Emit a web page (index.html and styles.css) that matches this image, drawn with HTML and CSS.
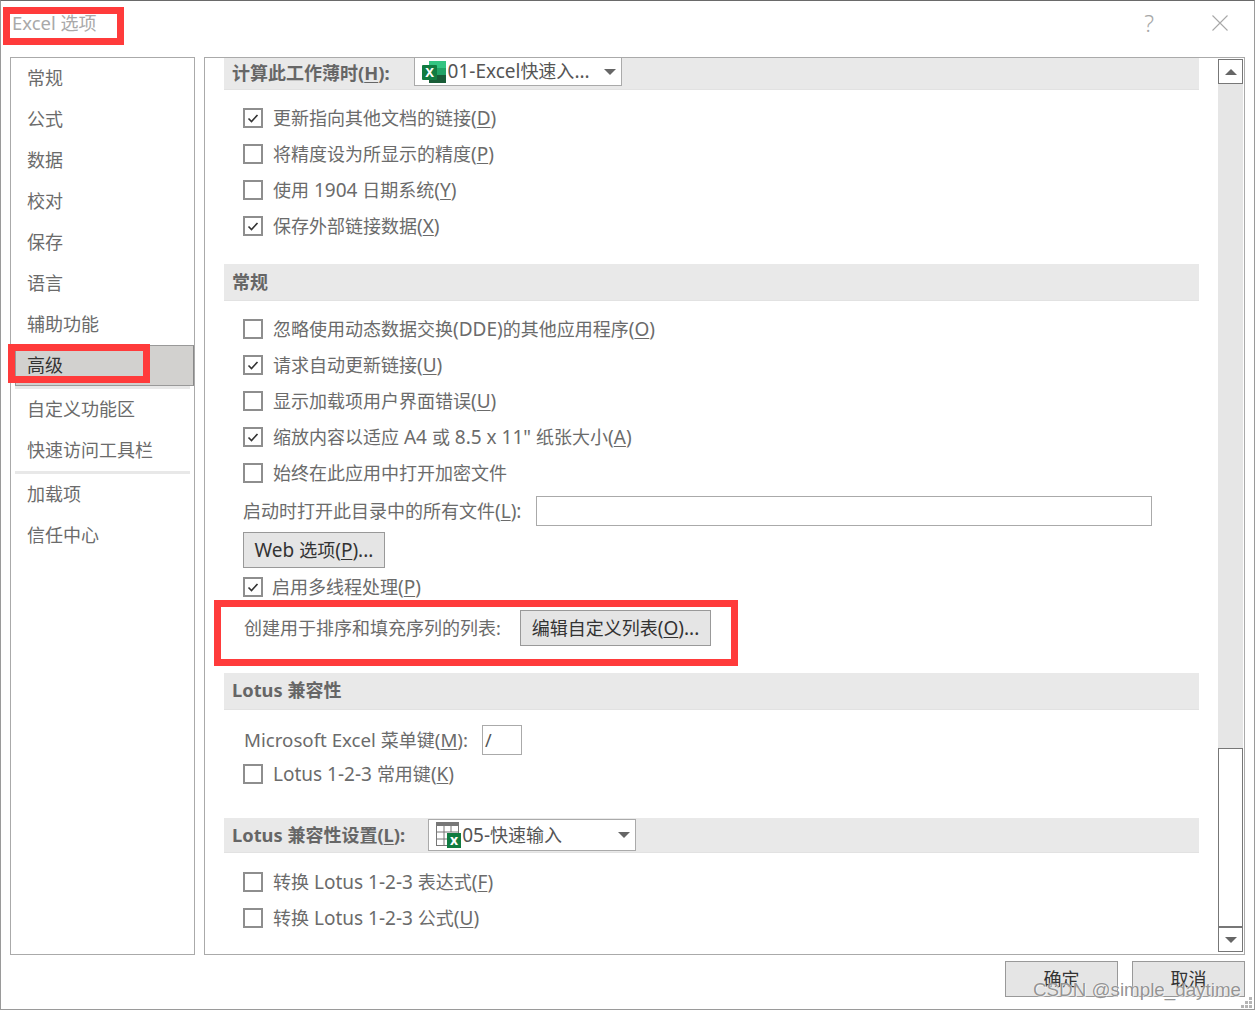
FILE: index.html
```html
<!DOCTYPE html>
<html lang="zh-CN">
<head>
<meta charset="utf-8">
<title>Excel 选项</title>
<link rel="stylesheet" href="styles.css">
</head>
<body>
<div class="window">
  <header class="titlebar">
    <span class="title"><span class="lt">Excel </span>选项</span>
    <div class="title-actions">
      <span class="help">?</span>
      <svg class="close" width="16" height="16" viewBox="0 0 16 16"><path d="M0.500 0.500 15.500 15.500M15.500 0.500 0.500 15.500" stroke="#a8a8a8" stroke-width="1.100" fill="none"/></svg>
    </div>
  </header>

  <div class="main">
    <nav class="sidebar">
      <div class="nav-item">常规</div>
      <div class="nav-item">公式</div>
      <div class="nav-item">数据</div>
      <div class="nav-item">校对</div>
      <div class="nav-item">保存</div>
      <div class="nav-item">语言</div>
      <div class="nav-item">辅助功能</div>
      <div class="nav-item selected">高级</div>
      <div class="nav-sep"></div>
      <div class="nav-item">自定义功能区</div>
      <div class="nav-item">快速访问工具栏</div>
      <div class="nav-sep"></div>
      <div class="nav-item">加载项</div>
      <div class="nav-item">信任中心</div>
    </nav>

    <section class="panel">
      <div class="content">
        <div class="section-head head-first">
          <span class="head-label">计算此工作薄时<span class="lt">(<u>H</u>):</span></span>
          <div class="combo combo-first">
            <svg class="xl-icon" width="24" height="24" viewBox="0 0 24 24">
              <rect x="7" y="1" width="17" height="8" fill="#33c481"/>
              <rect x="7" y="8" width="17" height="8" fill="#21a366"/>
              <rect x="7" y="15" width="17" height="8" fill="#185c37"/>
              <rect x="0" y="5" width="15" height="15" rx="1" fill="#107c41"/>
              <text x="7.500" y="17" class="xl-letter">X</text>
            </svg>
            <span class="combo-text"><span class="lt">01-Excel</span>快速入<span class="lt">...</span></span>
            <span class="arrow"></span>
          </div>
        </div>
        <div class="rows rows-a">
          <div class="row"><span class="check on"><svg width="16" height="16" viewBox="0 0 16 16"><path d="M3.500 8.500 6.500 11.500 12.500 5" stroke="#333" stroke-width="1.600" fill="none"/></svg></span><span class="label">更新指向其他文档的链接<span class="lt">(<u>D</u>)</span></span></div>
          <div class="row"><span class="check"></span><span class="label">将精度设为所显示的精度<span class="lt">(<u>P</u>)</span></span></div>
          <div class="row"><span class="check"></span><span class="label">使用<span class="lt"> 1904 </span>日期系统<span class="lt">(<u>Y</u>)</span></span></div>
          <div class="row"><span class="check on"><svg width="16" height="16" viewBox="0 0 16 16"><path d="M3.500 8.500 6.500 11.500 12.500 5" stroke="#333" stroke-width="1.600" fill="none"/></svg></span><span class="label">保存外部链接数据<span class="lt">(<u>X</u>)</span></span></div>
        </div>

        <div class="section-head head-general"><span class="head-label">常规</span></div>
        <div class="rows rows-b">
          <div class="row"><span class="check"></span><span class="label">忽略使用动态数据交换<span class="lt">(DDE)</span>的其他应用程序<span class="lt">(<u>O</u>)</span></span></div>
          <div class="row"><span class="check on"><svg width="16" height="16" viewBox="0 0 16 16"><path d="M3.500 8.500 6.500 11.500 12.500 5" stroke="#333" stroke-width="1.600" fill="none"/></svg></span><span class="label">请求自动更新链接<span class="lt">(<u>U</u>)</span></span></div>
          <div class="row"><span class="check"></span><span class="label">显示加载项用户界面错误<span class="lt">(<u>U</u>)</span></span></div>
          <div class="row"><span class="check on"><svg width="16" height="16" viewBox="0 0 16 16"><path d="M3.500 8.500 6.500 11.500 12.500 5" stroke="#333" stroke-width="1.600" fill="none"/></svg></span><span class="label">缩放内容以适应<span class="lt"> A4 </span>或<span class="lt"> 8.5 x 11" </span>纸张大小<span class="lt">(<u>A</u>)</span></span></div>
          <div class="row"><span class="check"></span><span class="label">始终在此应用中打开加密文件</span></div>
          <div class="field-row startup">
            <span class="field-label">启动时打开此目录中的所有文件<span class="lt">(<u>L</u>):</span></span>
            <span class="textbox textbox-wide"></span>
          </div>
          <button class="btn btn-web"><span class="lt">Web </span>选项<span class="lt">(<u>P</u>)...</span></button>
          <div class="row row-multi"><span class="check on"><svg width="16" height="16" viewBox="0 0 16 16"><path d="M3.500 8.500 6.500 11.500 12.500 5" stroke="#333" stroke-width="1.600" fill="none"/></svg></span><span class="label">启用多线程处理<span class="lt">(<u>P</u>)</span></span></div>
          <div class="field-row sortlist">
            <span class="field-label">创建用于排序和填充序列的列表:</span>
            <button class="btn btn-list">编辑自定义列表<span class="lt">(<u>O</u>)...</span></button>
          </div>
        </div>

        <div class="section-head head-lotus"><span class="head-label"><span class="lt">Lotus </span>兼容性</span></div>
        <div class="rows rows-c">
          <div class="field-row menukey">
            <span class="field-label"><span class="lt">Microsoft Excel </span>菜单键<span class="lt">(<u>M</u>):</span></span>
            <span class="textbox textbox-key">/</span>
          </div>
          <div class="row"><span class="check"></span><span class="label"><span class="lt">Lotus 1-2-3 </span>常用键<span class="lt">(<u>K</u>)</span></span></div>
        </div>

        <div class="section-head head-lotus-set">
          <span class="head-label"><span class="lt">Lotus </span>兼容性设置<span class="lt">(<u>L</u>):</span></span>
          <div class="combo combo-last">
            <svg class="sheet-icon" width="25" height="26" viewBox="0 0 25 26">
              <rect x="0.500" y="0.500" width="22" height="23" fill="#fff" stroke="#777"/>
              <rect x="0" y="0" width="23" height="4" fill="#777"/>
              <path d="M8 4V24M15 4V10M0 10H23M0 17H11" stroke="#777" fill="none"/>
              <rect x="11" y="11" width="14" height="15" fill="#107c41"/>
              <text x="18" y="23" class="xl-letter small">x</text>
            </svg>
            <span class="combo-text"><span class="lt">05-</span>快速输入</span>
            <span class="arrow"></span>
          </div>
        </div>
        <div class="rows rows-d">
          <div class="row"><span class="check"></span><span class="label">转换<span class="lt"> Lotus 1-2-3 </span>表达式<span class="lt">(<u>F</u>)</span></span></div>
          <div class="row"><span class="check"></span><span class="label">转换<span class="lt"> Lotus 1-2-3 </span>公式<span class="lt">(<u>U</u>)</span></span></div>
        </div>
      </div>

      <div class="scrollbar">
        <div class="sb-btn"><span class="tri-up"></span></div>
        <div class="sb-track"></div>
        <div class="sb-thumb"></div>
        <div class="sb-btn sb-btn-down"><span class="tri-down"></span></div>
      </div>
    </section>
  </div>

  <footer class="footer">
    <button class="btn btn-foot">确定</button>
    <button class="btn btn-foot">取消</button>
  </footer>

  <svg class="grip" width="12" height="12" viewBox="0 0 12 12"><path d="M8 0h3v3H8zM4 4h3v3H4zM8 4h3v3H8zM0 8h3v3H0zM4 8h3v3H4zM8 8h3v3H8z" fill="#b5b5b5"/></svg>
  <div class="mark mark-title"></div>
  <div class="mark mark-nav"></div>
  <div class="mark mark-list"></div>
  <div class="watermark">CSDN @simple_daytime</div>
</div>
</body>
</html>
```
FILE: styles.css
```css
* { box-sizing: border-box; }
html, body { margin: 0; padding: 0; background: #fff; }
body {
  font-family: "Noto Sans", "Noto Sans CJK SC", sans-serif;
  font-size: 18px;
  color: #6b6b6b;
  overflow: hidden;
}
u { text-underline-offset: 2px; text-decoration-thickness: 1px; }
.lt { font-size: 19px; white-space: pre; }
.window {
  position: relative;
  width: 1255px;
  height: 1010px;
  border-top: 1px solid #6a6a6a;
  border-left: 1px solid #9a9a9a;
  border-right: 1px solid #9a9a9a;
  border-bottom: 1px solid #9a9a9a;
  display: flex;
  flex-direction: column;
  overflow: hidden;
}
.titlebar {
  height: 56px;
  flex: none;
  display: flex;
  justify-content: space-between;
  align-items: flex-start;
  padding: 9px 26px 0 11px;
}
.title { color: #a9a9a9; line-height: 26px; }
.title .lt { font-size: 18.5px; }
.title-actions { display: flex; align-items: center; gap: 58px; }
.help { color: #a8a8a8; font-size: 23px; line-height: 26px; font-family: "Noto Sans", sans-serif; font-weight: 300; }
.close { display: block; }
.main { flex: none; display: flex; gap: 9px; padding-left: 9px; height: 898px; }
.sidebar {
  width: 185px;
  border: 1px solid #aaa;
  display: flex;
  flex-direction: column;
}
.nav-item { height: 41px; flex: none; line-height: 41px; padding-left: 16px; }
.nav-item.selected {
  margin-left: 4px;
  padding-left: 11px;
  background: #d2d1cf;
  border: 1px solid #999;
  border-right-color: #888;
  color: #333;
  line-height: 39px;
}
.nav-sep { height: 3px; flex: none; margin: 0 4px; background: #e8e8e8; }
.panel {
  width: 1041px;
  border: 1px solid #aaa;
  display: flex;
  padding-left: 19px;
}
.content { width: 975px; flex: none; }
.section-head {
  background: #e9e9e9;
  border-bottom: 1px solid #e2e2e2;
  display: flex;
  align-items: center;
  padding-left: 8px;
}
.head-label { font-weight: 700; color: #666; white-space: nowrap; padding-bottom: 2px; }
.head-label .lt { font-size: 18.3px; }
.head-first { height: 32px; align-items: flex-start; }
.head-first .head-label { line-height: 29px; }
.head-general { height: 37px; margin-top: 20px; }
.head-lotus { height: 37px; margin-top: 27px; }
.head-lotus .head-label { padding-bottom: 4px; }
.head-lotus-set { height: 35px; margin-top: 26px; }
.combo {
  height: 32px;
  background: #fff;
  border: 1px solid #aaa;
  display: flex;
  align-items: center;
  position: relative;
  color: #555;
}
.combo-first { width: 208px; height: 29px; margin-left: 24px; padding-left: 7px; margin-top: -1px; }
.combo-last { width: 208px; margin-left: 23px; padding-left: 7px; }
.combo-text { margin-left: 2px; white-space: nowrap; padding-bottom: 3px; }
.combo-last .combo-text { margin-left: 1px; padding-bottom: 2px; }
.xl-icon, .sheet-icon { flex: none; }
.xl-letter { fill: #fff; font: 700 13px "Noto Sans", sans-serif; text-anchor: middle; }
.xl-letter.small { font-size: 14px; }
.arrow {
  position: absolute;
  right: 5px;
  top: 50%;
  margin-top: -3px;
  border-left: 6px solid transparent;
  border-right: 6px solid transparent;
  border-top: 6px solid #666;
}
.rows { padding-left: 19px; }
.rows-a { margin-top: 10px; }
.rows-b { margin-top: 10px; }
.rows-c { margin-top: 15px; }
.rows-c .row { margin-top: 1px; }
.rows-d { margin-top: 11px; }
.row { height: 36px; display: flex; align-items: center; white-space: pre; }
.label { padding-bottom: 2px; white-space: pre; }
.check {
  width: 20px;
  height: 20px;
  flex: none;
  margin-right: 10px;
  border: 2px solid #8e8e8e;
  background: #fff;
  display: flex;
  align-items: center;
  justify-content: center;
}
.check svg { display: block; }
.field-row { display: flex; align-items: center; white-space: nowrap; }
.field-label { white-space: pre; padding-bottom: 2px; }
.startup { height: 30px; margin-top: 5px; }
.startup .field-label { width: 293px; flex: none; }
.textbox { display: block; height: 30px; border: 1px solid #aaa; background: #fff; color: #555; }
.textbox-wide { width: 616px; }
.btn {
  font: inherit;
  color: #333;
  background: #e5e5e5;
  border: 1px solid #999;
  border-radius: 0;
  padding: 0 0 2px;
  display: block;
  white-space: nowrap;
}
.btn-web { width: 142px; height: 36px; margin-top: 6px; }
.row-multi { margin-top: 1px; }
.row-multi .check { margin-right: 9px; }
.sortlist { height: 36px; margin-top: 5px; padding-left: 1px; }
.sortlist .field-label { width: 276px; flex: none; }
.btn-list { width: 191px; height: 36px; }
.menukey { height: 30px; padding-left: 1px; }
.menukey .field-label { width: 238px; flex: none; }
.menukey .lt { font-size: 18.7px; }
.textbox-key { width: 40px; padding-left: 2px; line-height: 28px; }
.scrollbar {
  width: 25px;
  flex: none;
  margin: 1px 0 1px 19px;
  display: flex;
  flex-direction: column;
}
.sb-btn {
  height: 25px;
  flex: none;
  border: 1px solid #777;
  background: #fff;
  display: flex;
  align-items: center;
  justify-content: center;
}
.sb-track { height: 664px; flex: none; background: #e6e6e6; }
.sb-thumb { height: 180px; flex: none; background: #fff; border: 1px solid #777; border-bottom-width: 2px; }
.sb-btn-down { height: 24px; border-top: 0; }
.tri-up { border-left: 6px solid transparent; border-right: 6px solid transparent; border-bottom: 6px solid #666; }
.tri-down { border-left: 6px solid transparent; border-right: 6px solid transparent; border-top: 6px solid #666; }
.footer {
  flex: none;
  display: flex;
  justify-content: flex-end;
  gap: 14px;
  padding: 6px 9px 0 0;
}
.btn-foot { width: 113px; height: 36px; line-height: 34px; }
.grip { position: absolute; right: 1px; bottom: 0; }
.mark { position: absolute; border: 7px solid #ff3b3b; pointer-events: none; }
.mark-title { left: 2px; top: 6px; width: 121px; height: 38px; }
.mark-nav { left: 7px; top: 343px; width: 142px; height: 39px; }
.mark-list { left: 213px; top: 599px; width: 524px; height: 66px; }
.watermark {
  position: absolute;
  left: 1032px;
  top: 977px;
  font-family: "Liberation Sans", sans-serif;
  font-size: 18.8px;
  line-height: 24px;
  color: rgba(120,120,120,.8);
  text-shadow: 0 0 1px #fff, 1px 1px 0 rgba(255,255,255,.6);
  white-space: nowrap;
}
```
